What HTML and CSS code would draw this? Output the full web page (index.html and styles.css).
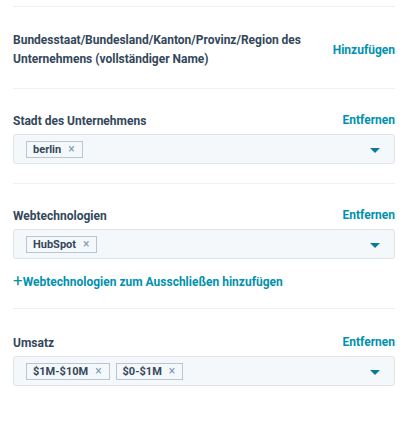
FILE: index.html
```html
<!DOCTYPE html>
<html lang="de">
<head>
<meta charset="utf-8">
<link rel="stylesheet" href="styles.css">
</head>
<body>
<div class="panel">
  <div class="divider"></div>
  <section class="section sec-first">
    <div class="head">
      <div class="label two">Bundesstaat/Bundesland/Kanton/Provinz/Region des Unternehmens (vollständiger Name)</div>
      <a class="link">Hinzufügen</a>
    </div>
  </section>
  <div class="divider"></div>
  <section class="section">
    <div class="head">
      <div class="label">Stadt des Unternehmens</div>
      <a class="link">Entfernen</a>
    </div>
    <div class="select">
      <div class="tags">
        <span class="tag">berlin<span class="x">×</span></span>
      </div>
      <span class="caret"></span>
    </div>
  </section>
  <div class="divider"></div>
  <section class="section sec-tech">
    <div class="head">
      <div class="label">Webtechnologien</div>
      <a class="link">Entfernen</a>
    </div>
    <div class="select">
      <div class="tags">
        <span class="tag">HubSpot<span class="x">×</span></span>
      </div>
      <span class="caret"></span>
    </div>
    <a class="add"><span class="plus">+</span>Webtechnologien zum Ausschließen hinzufügen</a>
  </section>
  <div class="divider"></div>
  <section class="section sec-last">
    <div class="head">
      <div class="label">Umsatz</div>
      <a class="link">Entfernen</a>
    </div>
    <div class="select">
      <div class="tags">
        <span class="tag">$1M-$10M<span class="x">×</span></span>
        <span class="tag">$0-$1M<span class="x">×</span></span>
      </div>
      <span class="caret"></span>
    </div>
  </section>
</div>
</body>
</html>
```
FILE: styles.css
```css
html, body {
  margin: 0;
  padding: 0;
  background: #ffffff;
}
body {
  font-family: Roboto, "Noto Sans", sans-serif;
  color: #33475b;
}
.panel {
  width: 382px;
  margin-left: 13px;
  padding-top: 6px;
}
.divider {
  height: 1px;
  background: #eaf0f6;
}
.section {
  padding: 22px 0 19px;
}
.sec-first {
  padding: 24px 0 19px;
}
.sec-tech {
  padding-bottom: 16px;
}
.sec-last {
  padding-top: 24px;
}
.head {
  display: flex;
  justify-content: space-between;
  align-items: center;
}
.label {
  font-size: 12px;
  font-weight: 700;
  line-height: 20px;
}
.label.two {
  width: 310px;
  line-height: 19px;
}
.link {
  font-size: 12px;
  font-weight: 700;
  color: #0091ae;
  line-height: 18px;
  margin-top: -3px;
}
.sec-first .link {
  margin-top: 0;
}
.select {
  margin-top: 3px;
  height: 28px;
  border: 1px solid #dfe3eb;
  border-radius: 3px;
  background: #f5f8fa;
  display: flex;
  align-items: center;
  justify-content: space-between;
  padding: 0 12px 0 12px;
}
.tags {
  display: flex;
  gap: 6px;
}
.tag {
  display: inline-flex;
  align-items: center;
  height: 15px;
  padding: 0 7px 0 6px;
  border: 1px solid #b7c5d6;
  background: #f5f8fa;
  font-size: 11px;
  font-weight: 700;
  color: #33475b;
}
.x {
  font-weight: 400;
  font-size: 12px;
  color: #7c98b6;
  margin-left: 7px;
}
.caret {
  width: 0;
  height: 0;
  border-left: 5px solid transparent;
  border-right: 5px solid transparent;
  border-top: 5px solid #0b7a99;
  margin-right: 2px;
  margin-top: 2px;
}
.add {
  display: block;
  margin-top: 11px;
  font-size: 12px;
  font-weight: 700;
  color: #0091ae;
  line-height: 20px;
}
.plus {
  font-weight: 400;
  font-size: 17px;
}
```
